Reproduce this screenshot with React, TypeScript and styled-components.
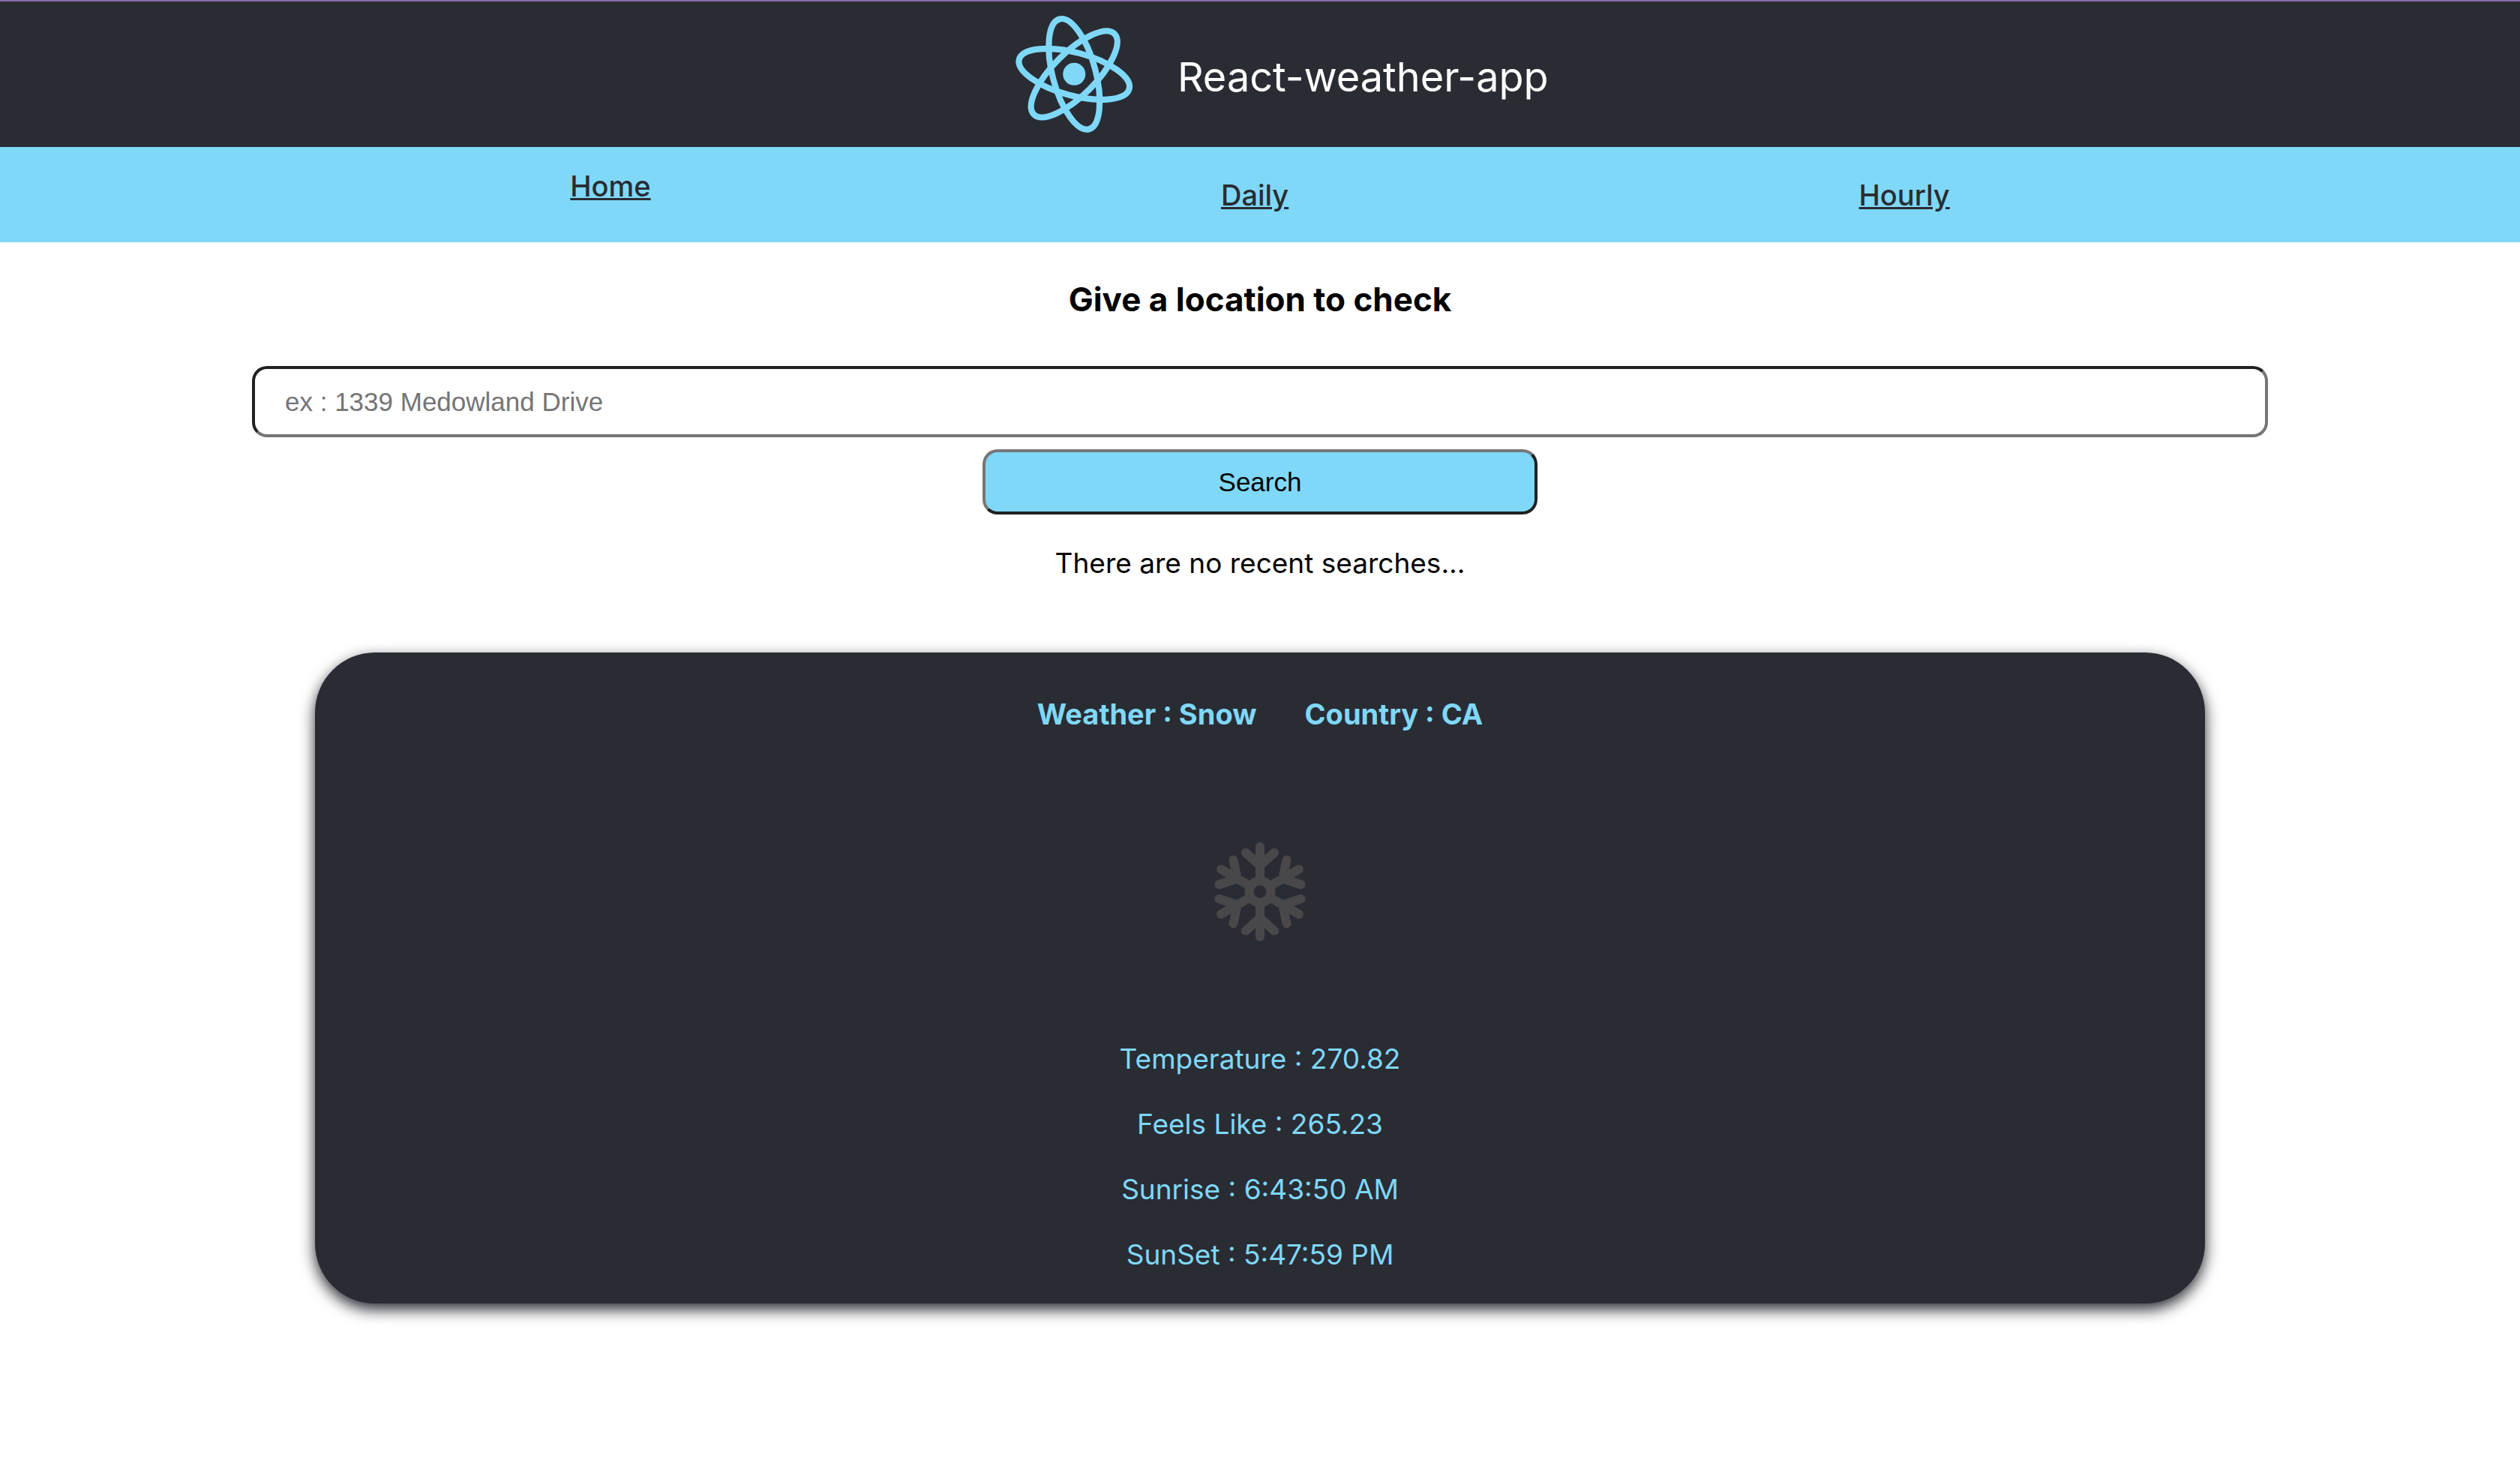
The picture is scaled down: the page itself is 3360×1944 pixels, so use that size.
import React from "react";
import styled, { createGlobalStyle } from "styled-components";

const ink = "#2a2c34";
const sky = "#7fd8f7";

const GlobalStyle = createGlobalStyle`
  *, *::before, *::after { box-sizing: border-box; }
  body {
    margin: 0;
    background: #ffffff;
    color: #000000;
    font-family: Inter, "Liberation Sans", sans-serif;
    font-size: 37px;
    line-height: 48px;
  }
`;

const Header = styled.header`
  display: flex;
  justify-content: center;
  align-items: center;
  border-top: 2px solid #8a6bb1;
  background: ${ink};
  color: #ffffff;
`;

const Logo = styled.svg`
  display: block;
  height: 194px;
`;

const AppName = styled.p`
  margin: 0;
  padding-top: 8px;
  font-size: 54px;
  line-height: 64px;
`;

const Nav = styled.nav`
  display: flex;
  justify-content: space-evenly;
  align-items: flex-start;
  padding: 28px 0 39px;
  background: ${sky};
`;

const NavLink = styled.a<{ $lowered?: boolean }>`
  margin-top: ${(p) => (p.$lowered ? 12 : 0)}px;
  color: ${ink};
  font-size: 38px;
  font-weight: 500;
  text-decoration: underline;
`;

const SearchForm = styled.form`
  display: flex;
  flex-direction: column;
  align-items: center;
  padding-top: 48px;
`;

const Prompt = styled.label`
  margin-bottom: 61px;
  font-size: 44px;
  font-weight: 700;
  line-height: 56px;
`;

const LocationInput = styled.input`
  width: 80%;
  height: 95px;
  margin-bottom: 16px;
  padding: 0 40px;
  border: 4px solid;
  border-color: #212121 #767676 #767676 #212121;
  border-radius: 20px;
  background: #ffffff;
  font-family: "Liberation Sans", Arial, sans-serif;
  font-size: 35px;

  &::placeholder {
    color: #757575;
    opacity: 1;
  }
`;

const SearchButton = styled.button`
  width: 22%;
  height: 87px;
  border: 4px solid;
  border-color: #767676 #212121 #212121 #767676;
  border-radius: 20px;
  background: ${sky};
  color: #000000;
  font-family: "Liberation Sans", Arial, sans-serif;
  font-size: 35px;
`;

const RecentSearches = styled.p`
  margin: 41px 0 95px;
  text-align: center;
`;

const Main = styled.main`
  padding-bottom: 80px;
`;

const WeatherCard = styled.section`
  display: flex;
  flex-direction: column;
  align-items: center;
  width: 75%;
  margin: 0 auto;
  padding: 58px 0 41px;
  border-radius: 80px;
  background: ${ink};
  box-shadow: 0 8px 20px ${ink};
  color: ${sky};
`;

const Summary = styled.div`
  display: flex;
  gap: 64px;
`;

const SummaryItem = styled.h4`
  margin: 0;
  font-size: 38px;
  font-weight: 700;
`;

const WeatherIcon = styled.svg`
  display: block;
  width: 200px;
  height: 200px;
  margin: 113px 0 99px;
`;

const Readings = styled.div`
  display: flex;
  flex-direction: column;
  gap: 39px;
  text-align: center;
`;

const Reading = styled.p`
  margin: 0;
`;

const orbits = [15, 75, 135];
const arms = [0, 60, 120, 180, 240, 300];

const readings = [
  "Temperature : 270.82",
  "Feels Like : 265.23",
  "Sunrise : 6:43:50 AM",
  "SunSet : 5:47:59 PM",
];

function ReactLogo() {
  return (
    <Logo viewBox="0 0 842 595" role="img" aria-label="logo">
      <g transform="translate(421 297)" fill="none" stroke={sky} strokeWidth="25">
        {orbits.map((angle) => (
          <ellipse key={angle} rx="233" ry="88" transform={`rotate(${angle})`} />
        ))}
        <circle r="46" fill={sky} stroke="none" />
      </g>
    </Logo>
  );
}

function SnowIcon() {
  return (
    <WeatherIcon viewBox="-100 -100 200 200" role="img" aria-label="Snow">
      <g fill="none" stroke="#48484a" strokeWidth="12" strokeLinecap="round" strokeLinejoin="round">
        <circle r="14.5" strokeWidth="12" />
        {arms.map((angle) => (
          <path key={angle} transform={`rotate(${angle})`} d="M0 -18V-60M-19 -52L0 -35L19 -52" />
        ))}
      </g>
    </WeatherIcon>
  );
}

export default function App() {
  return (
    <>
      <GlobalStyle />
      <Header>
        <ReactLogo />
        <AppName>React-weather-app</AppName>
      </Header>
      <Nav>
        <NavLink href="#home">Home</NavLink>
        <NavLink href="#daily" $lowered>Daily</NavLink>
        <NavLink href="#hourly" $lowered>Hourly</NavLink>
      </Nav>
      <Main>
        <SearchForm onSubmit={(e) => e.preventDefault()}>
          <Prompt htmlFor="location">Give a location to check</Prompt>
          <LocationInput id="location" type="text" placeholder="ex : 1339 Medowland Drive" />
          <SearchButton type="submit">Search</SearchButton>
        </SearchForm>
        <RecentSearches>There are no recent searches...</RecentSearches>
        <WeatherCard>
          <Summary>
            <SummaryItem>Weather : Snow</SummaryItem>
            <SummaryItem>Country : CA</SummaryItem>
          </Summary>
          <SnowIcon />
          <Readings>
            {readings.map((text) => (
              <Reading key={text}>{text}</Reading>
            ))}
          </Readings>
        </WeatherCard>
      </Main>
    </>
  );
}
